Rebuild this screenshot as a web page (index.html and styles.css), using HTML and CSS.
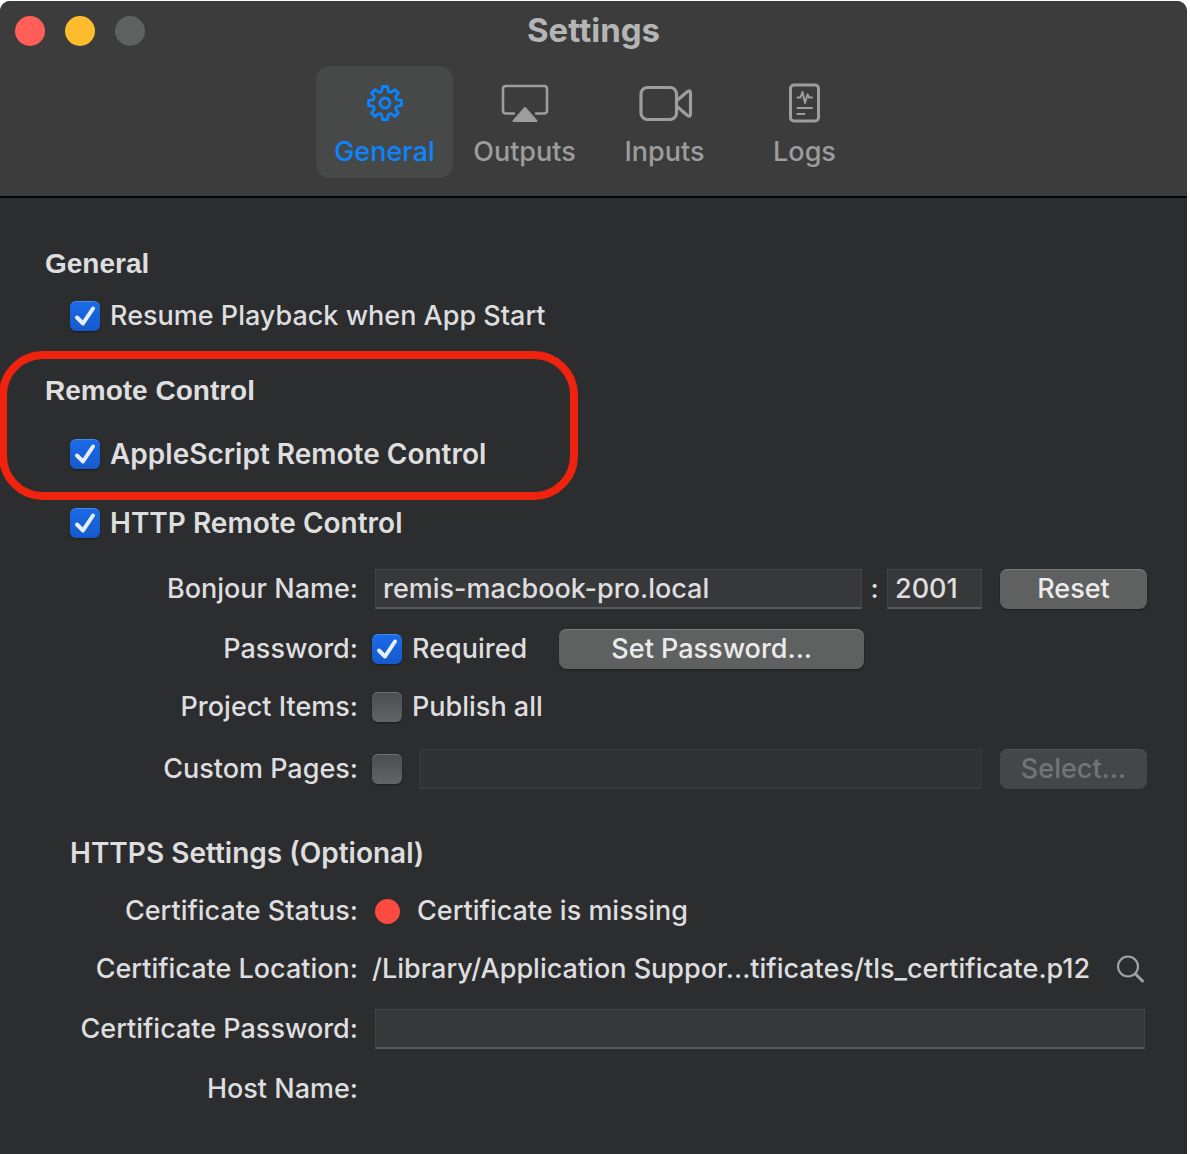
FILE: index.html
```html
<!DOCTYPE html>
<html lang="en">
<head>
    <meta charset="UTF-8">
    <meta name="viewport" content="width=device-width, initial-scale=1.0">
    <title>Settings</title>
    <link rel="stylesheet" href="styles.css">
</head>
<body>
    <div class="window">
        <!-- Title bar and toolbar -->
        <header class="titlebar">
            <div class="traffic-lights">
                <button class="light close" aria-label="Close"></button>
                <button class="light minimize" aria-label="Minimize"></button>
                <button class="light zoom" aria-label="Zoom" disabled></button>
            </div>
            <h1>Settings</h1>
            <nav class="toolbar">
                <button class="tab active">
                    <svg width="56" height="40" viewBox="-28 -20 56 40" fill="none" stroke="currentColor" stroke-width="2.8" stroke-linejoin="round">
                        <path d="M-3.1-12.6L-2.5-16.5H2.5L3.1-12.6Q4-9.7 6.7-11.1L9.9-13.4L13.4-9.9L11.1-6.7Q9.7-4 12.6-3.1L16.5-2.5V2.5L12.6 3.1Q9.7 4 11.1 6.7L13.4 9.9L9.9 13.4L6.7 11.1Q4 9.7 3.1 12.6L2.5 16.5H-2.5L-3.1 12.6Q-4 9.7-6.7 11.1L-9.9 13.4L-13.4 9.9L-11.1 6.7Q-9.7 4-12.6 3.1L-16.5 2.5V-2.5L-12.6-3.1Q-9.7-4-11.1-6.7L-13.4-9.9L-9.9-13.4L-6.7-11.1Q-4-9.7-3.1-12.6Z"/>
                        <circle r="5"/>
                    </svg>
                    <span>General</span>
                </button>
                <button class="tab">
                    <svg width="56" height="40" viewBox="0 0 56 40" fill="none" stroke="currentColor" stroke-width="2.6" stroke-linecap="round" stroke-linejoin="round">
                        <path d="M17 30.500H9Q6 30.500 6 27.500V6Q6 3 9 3H47Q50 3 50 6V27.500Q50 30.500 47 30.500H39"/>
                        <path d="M28 25L39.500 38H16.500Z" fill="currentColor" stroke-width="2"/>
                    </svg>
                    <span>Outputs</span>
                </button>
                <button class="tab">
                    <svg width="56" height="40" viewBox="0 0 56 40" fill="none" stroke="currentColor" stroke-width="3.200" stroke-linejoin="round">
                        <rect x="4" y="4.500" width="35.500" height="32" rx="6.500"/>
                        <path d="M40 17.500L50.500 8.500Q53.500 6.500 53.500 10V31Q53.500 34.500 50.500 32.500L40 23.500"/>
                    </svg>
                    <span>Inputs</span>
                </button>
                <button class="tab">
                    <svg width="56" height="40" viewBox="0 0 56 40" fill="none" stroke="currentColor" stroke-width="2" stroke-linecap="round" stroke-linejoin="round">
                        <rect x="13.500" y="2" width="28" height="36" rx="3.500" stroke-width="3"/>
                        <path d="M20.500 14.500H23.500L25.500 9L28 20L30.500 11.500L32 14.500H35M20.500 25H35M20.500 31H27.500"/>
                    </svg>
                    <span>Logs</span>
                </button>
            </nav>
        </header>

        <main class="content">
            <section class="general">
                <h2>General</h2>
                <div class="option">
                    <input type="checkbox" id="resume" checked>
                    <label for="resume">Resume Playback when App Start</label>
                </div>
            </section>

            <section class="remote">
                <h2>Remote Control</h2>
                <div class="option strong">
                    <input type="checkbox" id="applescript" checked>
                    <label for="applescript">AppleScript Remote Control</label>
                </div>
            </section>

            <section class="http">
                <div class="option strong">
                    <input type="checkbox" id="http" checked>
                    <label for="http">HTTP Remote Control</label>
                </div>
                <div class="row first">
                    <label class="name" for="bonjour">Bonjour Name:</label>
                    <div class="value">
                        <input type="text" class="field" id="bonjour" value="remis-macbook-pro.local">
                        <span class="colon">:</span>
                        <input type="text" class="field port" aria-label="Port" value="2001">
                        <button class="btn">Reset</button>
                    </div>
                </div>
                <div class="row">
                    <span class="name">Password:</span>
                    <div class="value">
                        <input type="checkbox" id="required" checked>
                        <label for="required">Required</label>
                        <button class="btn wide">Set Password...</button>
                    </div>
                </div>
                <div class="row tight">
                    <span class="name">Project Items:</span>
                    <div class="value">
                        <input type="checkbox" id="publish">
                        <label for="publish">Publish all</label>
                    </div>
                </div>
                <div class="row loose">
                    <label class="name" for="custom">Custom Pages:</label>
                    <div class="value">
                        <input type="checkbox" id="custom">
                        <input type="text" class="field path" aria-label="Custom pages folder" disabled>
                        <button class="btn" disabled>Select...</button>
                    </div>
                </div>
            </section>

            <section class="https">
                <h3>HTTPS Settings (Optional)</h3>
                <div class="row tight">
                    <span class="name">Certificate Status:</span>
                    <div class="value">
                        <span class="status-dot"></span>
                        <span>Certificate is missing</span>
                    </div>
                </div>
                <div class="row tight">
                    <span class="name">Certificate Location:</span>
                    <div class="value">
                        <span>/Library/Application Suppor...tificates/tls_certificate.p12</span>
                        <button class="reveal" aria-label="Show in Finder">
                            <svg width="28" height="28" viewBox="0 0 28 28" fill="none" stroke="currentColor" stroke-width="2.200" stroke-linecap="round">
                                <circle cx="11" cy="11.500" r="10"/>
                                <path d="M18.500 19L25.500 26" stroke-width="3"/>
                            </svg>
                        </button>
                    </div>
                </div>
                <div class="row">
                    <label class="name" for="cert-password">Certificate Password:</label>
                    <div class="value">
                        <input type="password" class="field full" id="cert-password">
                    </div>
                </div>
                <div class="row">
                    <span class="name">Host Name:</span>
                </div>
            </section>
        </main>
    </div>
</body>
</html>
```

FILE: styles.css
```css
*, *::before, *::after {
    box-sizing: border-box;
}
body {
    margin: 0;
    padding: 1px 3px 0 0;
    background: #ffffff;
    font-family: Inter, "Liberation Sans", sans-serif;
    font-size: 27px;
    font-weight: 500;
    line-height: 40px;
    color: #dededf;
}
.window {
    min-height: calc(100vh - 1px);
    background: #2c2d2f;
    border-radius: 10px 10px 0 0;
    overflow: hidden;
}
button, input {
    font: inherit;
    color: inherit;
    margin: 0;
}
button {
    border: none;
    background: none;
    padding: 0;
}
h1, h2, h3 {
    margin: 0;
}

/* Title bar */
.titlebar {
    position: relative;
    background: #3b3c3b;
    border-bottom: 2px solid #060606;
    padding: 9px 0 18px;
}
.titlebar h1 {
    font-size: 33px;
    font-weight: 700;
    text-align: center;
    color: #b4b5b4;
}
.traffic-lights {
    position: absolute;
    top: 15px;
    left: 15px;
    display: flex;
    gap: 20px;
}
.light {
    width: 30px;
    height: 30px;
    border-radius: 50%;
}
.close {
    background: #ff5f57;
}
.minimize {
    background: #febc2e;
}
.zoom {
    background: #5f6160;
}
.toolbar {
    display: flex;
    justify-content: center;
    gap: 3px;
    margin-top: 16px;
    padding-left: 2px;
}
.tab {
    display: flex;
    flex-direction: column;
    align-items: center;
    gap: 9px;
    width: 137px;
    height: 112px;
    padding-top: 17px;
    border-radius: 14px;
    color: #9c9d9c;
    line-height: 40px;
}
.tab.active {
    background: #474948;
    color: #0a84ff;
}

/* Settings */
.content {
    padding: 46px 40px 45px 45px;
}
h2 {
    font-family: "Liberation Sans", Arial, sans-serif;
    font-size: 28px;
    line-height: 40px;
}
h3 {
    font-size: 28px;
    font-weight: 600;
    padding-left: 25px;
}
.option {
    display: flex;
    align-items: center;
    gap: 10px;
    padding-left: 25px;
    margin-top: 12px;
}
.strong {
    font-size: 28px;
    font-weight: 600;
}
.remote {
    position: relative;
    margin-top: 35px;
}
.remote .option {
    margin-top: 23px;
}
/* Red outline round the AppleScript option */
.remote::after {
    content: "";
    position: absolute;
    top: -20px;
    left: -46px;
    width: 579px;
    height: 149px;
    border: 8px solid #f0240e;
    border-radius: 44px;
    pointer-events: none;
}
.http .option {
    margin-top: 29px;
}
.https {
    margin-top: 44px;
}
.row {
    display: flex;
    align-items: center;
    gap: 14px;
    margin-top: 20px;
}
.row.first {
    margin-top: 26px;
}
.row.tight {
    margin-top: 18px;
}
.row.loose {
    margin-top: 22px;
}
.name {
    flex: none;
    width: 313px;
    text-align: right;
}
.value {
    flex: 1;
    min-width: 0;
    display: flex;
    align-items: center;
    white-space: nowrap;
}
.value label {
    margin-left: 10px;
}

input[type="checkbox"] {
    appearance: none;
    flex: none;
    width: 30px;
    height: 30px;
    border-radius: 6px;
    background: linear-gradient(#4b4c4e, #636466);
    box-shadow: inset 0 1px 0 #707173, 0 1px 2px rgba(0, 0, 0, 0.4);
}
input[type="checkbox"]:checked {
    background: url("data:image/svg+xml,%3Csvg xmlns='http://www.w3.org/2000/svg' viewBox='0 0 30 30'%3E%3Cpath d='M7 16.5L13 22.500L23 7.500' fill='none' stroke='%23e8eefb' stroke-width='4' stroke-linecap='round' stroke-linejoin='round'/%3E%3C/svg%3E"), linear-gradient(#1a6bea, #155acb);
    box-shadow: inset 0 1px 0 #4787ee, 0 1px 2px rgba(0, 0, 0, 0.4);
}

.field {
    flex: 1;
    min-width: 0;
    height: 40px;
    margin-left: 3px;
    padding: 0 7px;
    border: 1px solid #434446;
    border-bottom: 2px solid #58595b;
    border-radius: 0;
    background: #373839;
    outline: none;
}
.field:disabled {
    background: #313234;
    border-color: #38393b;
}
.field.port {
    flex: none;
    width: 95px;
    margin-left: 0;
}
.field.path {
    margin-left: 17px;
}
.field.full {
    margin-right: 2px;
}
.colon {
    width: 25px;
    text-align: center;
}

.btn {
    width: 147px;
    height: 40px;
    margin-left: 18px;
    border-radius: 8px;
    background: #5f6160;
    color: #ececec;
    box-shadow: inset 0 1px 0 #7b7c7c, 0 1px 2px rgba(0, 0, 0, 0.4);
}
.btn.wide {
    width: 305px;
    margin-left: 32px;
}
.btn:disabled {
    background: #454648;
    color: #737476;
    box-shadow: inset 0 1px 0 #525355;
}

.status-dot {
    width: 25px;
    height: 25px;
    margin: 0 17px 0 3px;
    border-radius: 50%;
    background: #ff4a42;
}
.reveal {
    display: flex;
    margin-left: auto;
    margin-right: 2px;
    color: #a0a1a2;
}
```
